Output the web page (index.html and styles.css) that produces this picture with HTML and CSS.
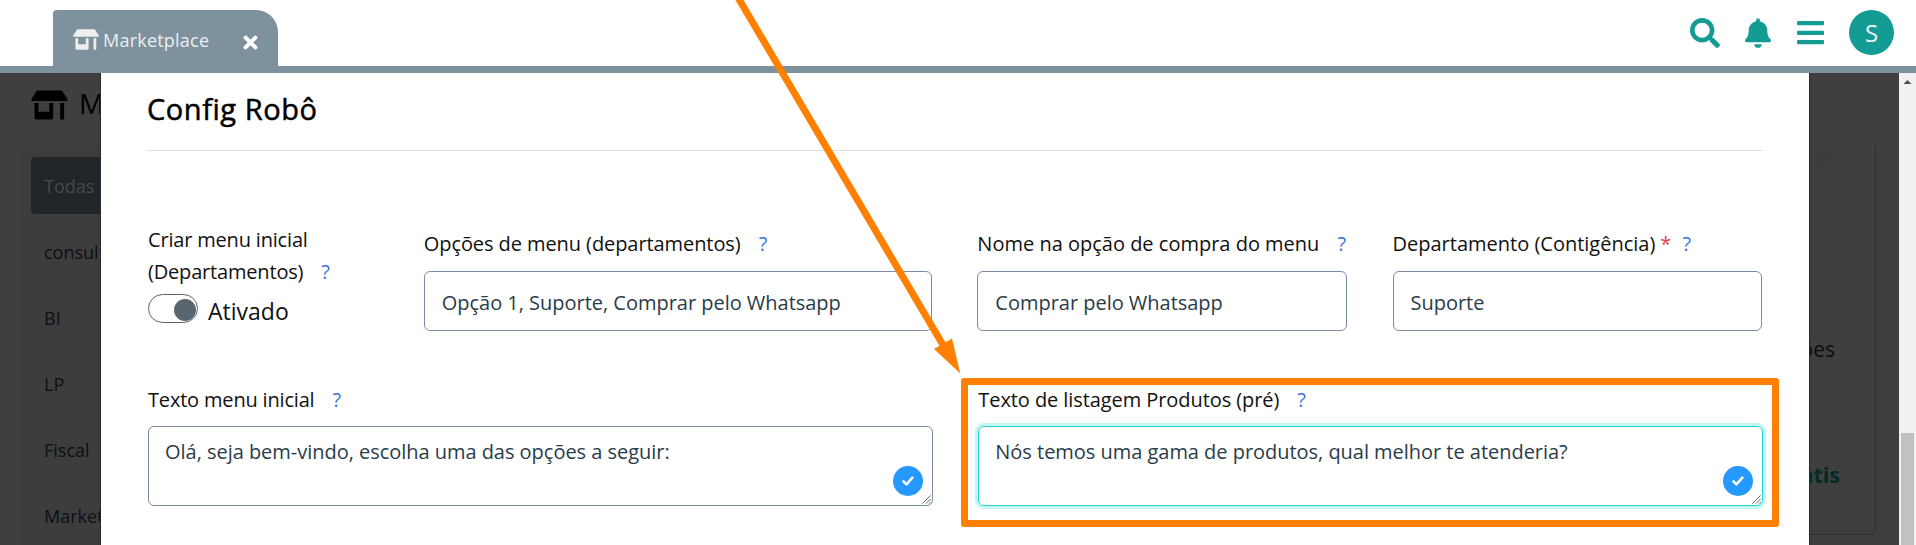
FILE: index.html
```html
<!DOCTYPE html>
<html lang="pt-BR">
<head>
<meta charset="utf-8">
<title>Marketplace</title>
<link rel="stylesheet" href="styles.css">
</head>
<body>
<svg class="defs" width="0" height="0">
  <symbol id="store" viewBox="0 0 38 30">
    <path d="M6.200 0H31.800L37.600 9Q38.200 11 36.500 11H1.500Q-.2 11 .4 9Z"/>
    <path d="M3.600 13H7.600V22H18.800V13H22.800V28Q22.800 30 20.800 30H5.600Q3.600 30 3.600 28ZM30 13H34V29Q34 30 33 30H31Q30 30 30 29Z"/>
  </symbol>
  <symbol id="check" viewBox="0 0 12 10">
    <path d="M1.500 5.400L4.400 8.300L10.400 1.600" fill="none" stroke="#fff" stroke-width="2.500" stroke-linecap="round" stroke-linejoin="round"/>
  </symbol>
</svg>

<header class="topbar">
  <div class="tab">
    <svg class="tab-icon"><use href="#store"/></svg>
    <span class="tab-title">Marketplace</span>
    <svg class="tab-close" viewBox="0 0 15 15"><path d="M2.600 2.600L12.400 12.400M12.400 2.600L2.600 12.400"/></svg>
  </div>
  <div class="actions">
    <svg class="search" viewBox="0 0 512 512"><path d="M505 442.700L405.300 343c-4.500-4.500-10.600-7-17-7H372c27.600-35.300 44-79.700 44-128C416 93.100 322.900 0 208 0S0 93.100 0 208s93.100 208 208 208c48.300 0 92.700-16.400 128-44v16.300c0 6.400 2.500 12.500 7 17l99.700 99.700c9.400 9.400 24.600 9.400 33.900 0l28.300-28.300c9.400-9.400 9.400-24.600.1-34zM208 336c-70.700 0-128-57.200-128-128 0-70.700 57.200-128 128-128 70.700 0 128 57.200 128 128 0 70.700-57.200 128-128 128z"/></svg>
    <svg class="bell" viewBox="0 0 448 512"><path d="M224 512c35.320 0 63.970-28.650 63.970-64H160.030c0 35.350 28.650 64 63.970 64zm215.390-149.710c-19.320-20.760-55.470-51.990-55.470-154.290 0-77.700-54.480-139.900-127.940-155.160V32c0-17.670-14.320-32-31.980-32s-31.980 14.330-31.980 32v20.840C118.560 68.100 64.080 130.300 64.080 208c0 102.300-36.150 133.530-55.470 154.290-6 6.450-8.660 14.160-8.610 21.710.11 16.400 12.980 32 32.100 32h383.800c19.120 0 32-15.600 32.100-32 .05-7.550-2.610-15.270-8.610-21.710z"/></svg>
    <svg class="bars" viewBox="0 0 27 24"><rect width="27" height="4.200" rx="1"/><rect y="9.700" width="27" height="4.200" rx="1"/><rect y="19" width="27" height="4.200" rx="1"/></svg>
    <div class="avatar">S</div>
  </div>
</header>

<main class="page">
  <div class="page-title"><svg class="page-icon"><use href="#store"/></svg>Marketplace</div>
  <nav class="side">
    <div class="side-item active">Todas</div>
    <div class="side-item">consultoria</div>
    <div class="side-item">BI</div>
    <div class="side-item">LP</div>
    <div class="side-item">Fiscal</div>
    <div class="side-item">Marketplace</div>
  </nav>
  <section class="card">
    <div class="ribbon"></div>
    <div class="card-text">Integrações</div>
    <div class="card-price">Grátis</div>
  </section>

  <section class="modal">
    <h2>Config Robô</h2>
    <div class="grid">
      <div class="field w2">
        <label class="tight">Criar menu inicial<br>(Departamentos)<i class="help">?</i></label>
        <div class="switch-row"><span class="switch"></span><span class="switch-text">Ativado</span></div>
      </div>
      <div class="field w4 drop">
        <label class="snug">Opções de menu (departamentos)<i class="help">?</i></label>
        <div class="input">Opção 1, Suporte, Comprar pelo Whatsapp</div>
      </div>
      <div class="field w3 drop">
        <label>Nome na opção de compra do menu<i class="help">?</i></label>
        <div class="input">Comprar pelo Whatsapp</div>
      </div>
      <div class="field w3 drop">
        <label>Departamento (Contigência)<b class="req">*</b><i class="help near">?</i></label>
        <div class="input">Suporte</div>
      </div>
      <div class="field w6">
        <label class="tight">Texto menu inicial<i class="help">?</i></label>
        <div class="area">Olá, seja bem-vindo, escolha uma das opções a seguir:
          <span class="badge"><svg><use href="#check"/></svg></span>
          <svg class="grip" viewBox="0 0 10 10"><path d="M.5 9.500L9.500 .5M4.500 9.500L9.500 4.500M8 9.500L9.500 8"/></svg>
        </div>
      </div>
      <div class="field w6">
        <label class="snug">Texto de listagem Produtos (pré)<i class="help">?</i></label>
        <div class="area focus">Nós temos uma gama de produtos, qual melhor te atenderia?
          <span class="badge"><svg><use href="#check"/></svg></span>
          <svg class="grip" viewBox="0 0 10 10"><path d="M.5 9.500L9.500 .5M4.500 9.500L9.500 4.500M8 9.500L9.500 8"/></svg>
        </div>
      </div>
    </div>
  </section>

  <aside class="scrollbar"><span class="scroll-up"></span><span class="thumb"></span></aside>
</main>

<div class="highlight"></div>
<svg class="arrow" viewBox="0 0 1916 545">
  <path class="shaft" d="M736.500 -5L943 345"/>
  <path class="head" d="M934 349L952 338.500L960.300 373.500Z"/>
</svg>
</body>
</html>
```
FILE: styles.css
```css
* { box-sizing: border-box; }
body {
  margin: 0;
  width: 1916px;
  height: 545px;
  overflow: hidden;
  position: relative;
  background: #fff;
  font: 20px/32px "Open Sans", "Noto Sans", sans-serif;
  color: #111;
}
.defs { position: absolute; }

/* top bar */
.topbar {
  display: flex;
  justify-content: space-between;
  align-items: flex-end;
  height: 73px;
  padding: 0 22px 0 53px;
  border-bottom: 7px solid #7d929d;
}
.tab {
  display: flex;
  align-items: center;
  width: 225px;
  height: 56px;
  padding: 0 20px;
  border-radius: 4px 22px 0 0;
  background: #7d929d;
  color: #eee;
  font-size: 18px;
}
.tab-icon { width: 26px; height: 21px; margin: 3px 4px 0 0; fill: #eee; }
.tab-title { flex: 1; letter-spacing: .22px; padding-top: 4px; }
.tab-close { width: 15px; height: 15px; margin-top: 9px; fill: none; stroke: #fff; stroke-width: 4; stroke-linecap: round; }
.actions { display: flex; align-items: center; height: 66px; }
.actions svg { fill: #149c94; }
.search { width: 30px; height: 30px; margin-right: 25px; }
.bell { width: 26px; height: 30px; margin-right: 26px; }
.bars { width: 27px; height: 24px; margin-right: 25px; }
.avatar {
  width: 45px;
  height: 45px;
  margin-bottom: 1px;
  border-radius: 50%;
  background: #149c94;
  color: #f2f2f2;
  font-size: 24px;
  line-height: 46px;
  text-align: center;
}

/* page behind the dialog */
.page { position: relative; height: 472px; background: #3f3f3f; color: #0b1013; overflow: hidden; }
.page-title { display: flex; align-items: center; width: 101px; height: 72px; padding: 0 0 12px 31px; overflow: hidden; font-size: 28px; color: #000; }
.page-icon { flex: none; width: 37px; height: 30px; margin: 3px 11px 0 0; fill: #000; }
.side { width: 82px; height: 420px; margin-left: 19px; padding: 12px 0 0 12px; overflow: hidden; background: #3d3d3d; font-size: 18px; }
.side-item { height: 57px; margin-bottom: 9px; padding-left: 13px; line-height: 59px; }
.active { border-radius: 4px 0 0 4px; background: #1f2528; color: #47494a; }
.card {
  position: absolute;
  top: 72px;
  right: 40px;
  width: 400px;
  height: 390px;
  padding-right: 40px;
  border: solid #2f2f2f;
  border-width: 0 1px 1px 0;
  border-radius: 0 0 6px 0;
  text-align: right;
}
.ribbon { width: 200px; height: 28px; margin: 0 -4px 0 auto; border-radius: 0 0 28px 0; background: #3d3d3d; }
.card-text { padding-top: 160px; color: #0c0c0c; font-size: 21px; }
.card-price { margin: 94px -5px 0 0; font-weight: 700; font-size: 21.500px; color: #002b29; }
.scrollbar { position: absolute; top: 0; right: 0; width: 17px; height: 472px; padding: 7px 2px 0; background: #f1f1f1; }
.scroll-up { display: block; margin: 0 auto 349px; width: 8px; height: 4px; background: #505050; clip-path: polygon(50% 0, 100% 100%, 0 100%); }
.thumb { display: block; height: 112px; background: #c1c1c1; }

/* dialog */
.modal {
  position: absolute;
  top: 0;
  left: 100px;
  width: 1710px;
  height: 472px;
  padding: 14px 46px 0 47px;
  border: solid #2a2a2a;
  border-width: 0 1px;
  background: #fff;
  color: #111;
}
h2 {
  height: 64px;
  margin: 0 0 0 -1px;
  border-bottom: 1px solid #e2e2e2;
  font-size: 29px;
  font-weight: 500;
  line-height: 43px;
  letter-spacing: .550px;
  color: #000;
  -webkit-text-stroke: .5px #000;
}
.grid { display: grid; grid-template-columns: repeat(12, 1fr); column-gap: 45.700px; grid-auto-rows: 160px; padding-top: 72px; }
.field { min-width: 0; }
.w2 { grid-column: span 2; }
.w3 { grid-column: span 3; }
.w4 { grid-column: span 4; }
.w6 { grid-column: span 6; }
.drop { padding-top: 4px; margin: 0 1px 0 -1px; }
label { display: block; height: 32px; padding-top: 1px; white-space: nowrap; }
.tight { letter-spacing: -.18px; }
.snug { letter-spacing: -.08px; }
.help { margin-left: 18px; font-style: normal; color: #3b73e0; }
.near { margin-left: 11px; }
.req { margin-left: 5px; font-weight: 400; color: #e04050; }
.input {
  height: 60px;
  margin-top: 12px;
  padding-left: 17px;
  border: 1px solid #7a8ba6;
  border-radius: 6px;
  line-height: 61px;
  letter-spacing: -.02px;
  color: #293c48;
}
.area {
  position: relative;
  height: 80px;
  margin-top: 11px;
  padding: 9px 16px;
  border: 1px solid #7a8ba6;
  border-radius: 6px;
  letter-spacing: -.03px;
  color: #293c48;
}
.focus { border-color: #20d5cb; box-shadow: 0 0 0 3px #c6f5f1; }
.badge {
  position: absolute;
  right: 9px;
  bottom: 9px;
  display: grid;
  place-items: center;
  width: 30px;
  height: 30px;
  border-radius: 50%;
  background: #2699ff;
}
.badge svg { width: 12px; height: 10px; }
.grip { position: absolute; right: 1px; bottom: 1px; width: 9px; height: 9px; stroke: #555; fill: none; stroke-width: 1; }
.switch-row { display: flex; align-items: center; height: 44px; margin-top: 31px; }
.switch { width: 50px; height: 29px; padding: 4px 1px; border: 1px solid #5a666d; border-radius: 15px; }
.switch::after { content: ""; display: block; width: 22px; height: 22px; margin-left: auto; border-radius: 50%; background: #5a666d; }
.switch-text { margin: 5px 0 0 10px; font-size: 23px; }

/* callout */
.highlight { position: absolute; left: 961px; top: 378px; width: 818px; height: 149px; border: 7px solid #ff8000; border-radius: 3px; }
.arrow { position: absolute; left: 0; top: 0; width: 1916px; height: 545px; }
.shaft { stroke: #ff8000; stroke-width: 7; }
.head { fill: #ff8000; }
```
